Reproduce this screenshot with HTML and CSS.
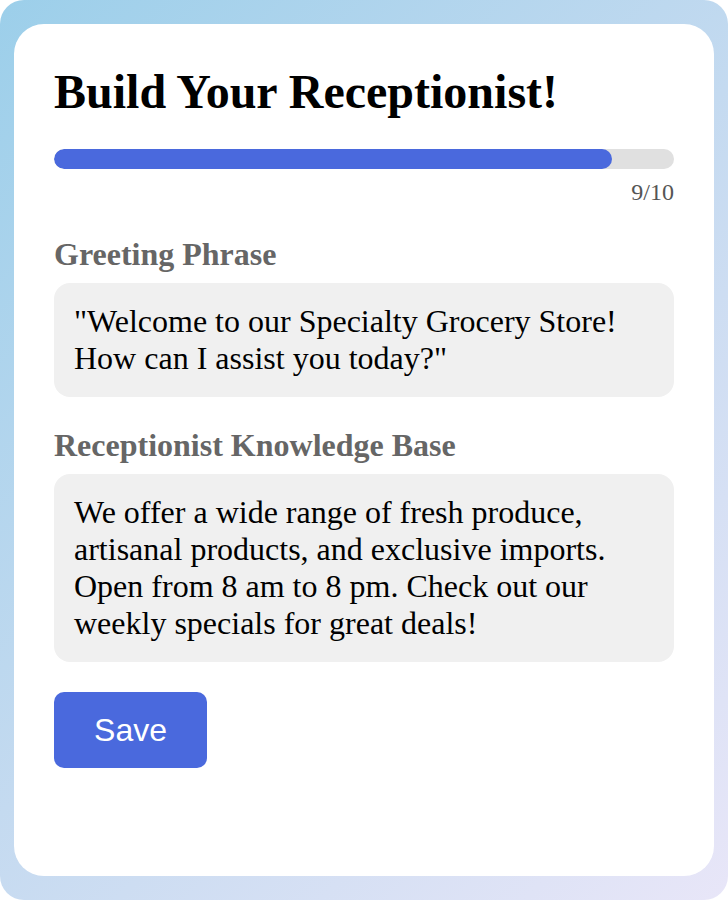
FILE: index.html
```html
<!DOCTYPE html>
<html>

<head>
    <title>Build Your Receptionist</title>
    <link rel="stylesheet" href="styles.css">
</head>

<body>
    <div class="backdrop">
        <div class="card">
            <h1>Build Your Receptionist!</h1>

            <div class="progress">
                <div class="progress-fill" style="width: 90%"></div>
            </div>
            <div class="step">9/10</div>

            <div class="field">
                <div class="label">Greeting Phrase</div>
                <div class="textbox">"Welcome to our Specialty Grocery Store! How can I assist you today?"</div>
            </div>

            <div class="field">
                <div class="label">Receptionist Knowledge Base</div>
                <div class="textbox">We offer a wide range of fresh produce, artisanal products, and exclusive imports. Open from 8 am to 8 pm. Check out our weekly specials for great deals!</div>
            </div>

            <button class="save">Save</button>
        </div>
    </div>
</body>

</html>
```

FILE: styles.css
```css
body {
    margin: 0;
    background-color: #fff;
    font-family: "Liberation Serif", "Times New Roman", serif;
}

.backdrop {
    box-sizing: border-box;
    width: 728px;
    height: 900px;
    padding: 24px 14px;
    border-radius: 24px;
    background: linear-gradient(135deg, #9ccfea 0%, #c4daf0 50%, #e8e6f8 100%);
}

.card {
    box-sizing: border-box;
    height: 100%;
    background-color: #fff;
    border-radius: 30px;
    padding: 40px 40px;
}

h1 {
    margin: 0 0 30px 0;
    font-size: 48px;
    font-weight: bold;
    color: #000;
}

.progress {
    height: 20px;
    background-color: #e0e0e0;
    border-radius: 10px;
    overflow: hidden;
}

.progress-fill {
    height: 100%;
    background-color: #4a69dd;
    border-radius: 10px;
}

.step {
    text-align: right;
    font-size: 24px;
    color: #555;
    margin-top: 10px;
}

.field {
    margin-top: 30px;
}

.label {
    font-size: 32px;
    font-weight: bold;
    color: #666;
    margin-bottom: 10px;
}

.textbox {
    background-color: #f0f0f0;
    border-radius: 16px;
    padding: 20px;
    font-size: 32px;
    color: #000;
}

.save {
    display: block;
    margin-top: 30px;
    width: 153px;
    height: 76px;
    border: none;
    border-radius: 10px;
    background-color: #4a69dd;
    color: #fff;
    font-family: "Liberation Sans", Arial, sans-serif;
    font-size: 32px;
}
```
